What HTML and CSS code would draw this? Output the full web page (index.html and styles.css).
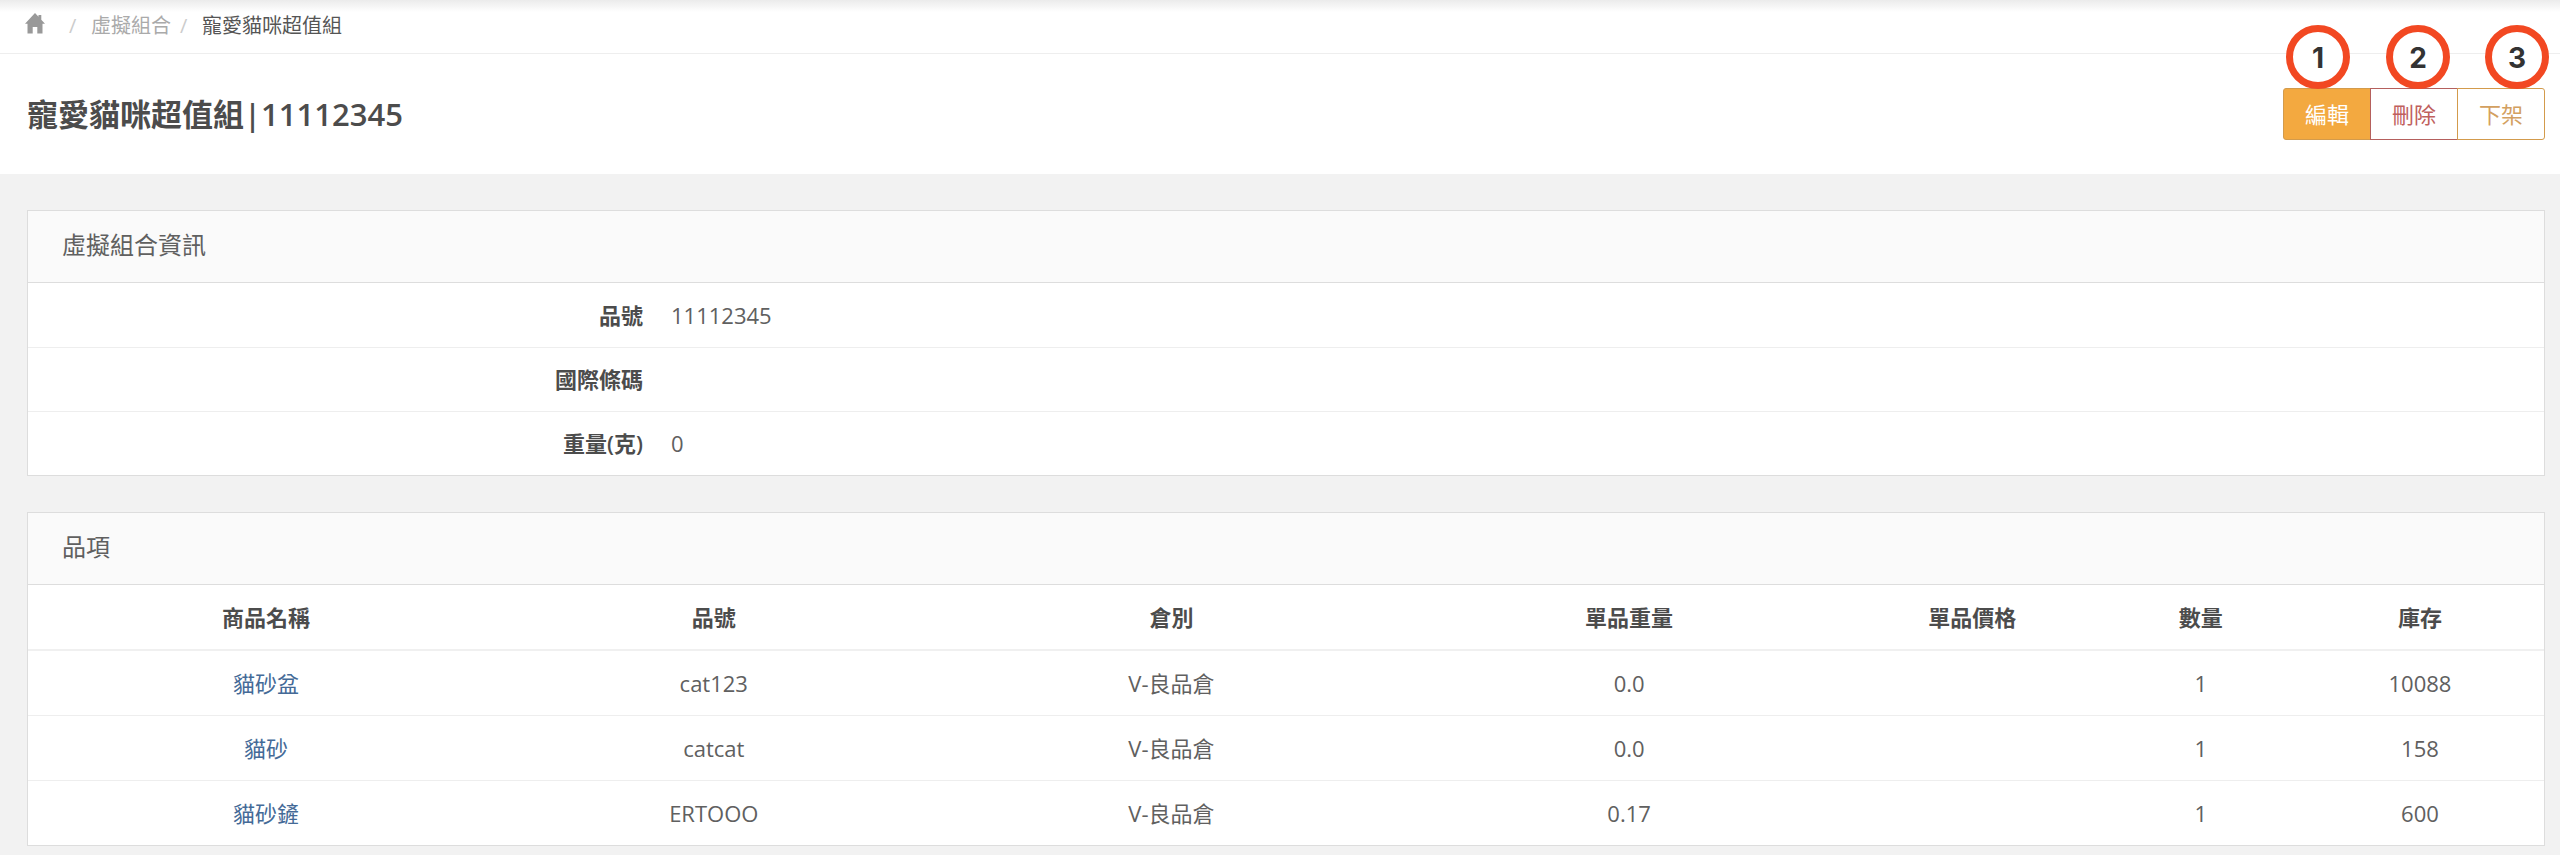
FILE: index.html
```html
<!DOCTYPE html>
<html lang="zh-Hant">
<head>
  <meta charset="UTF-8">
  <meta name="viewport" content="width=device-width, initial-scale=1.0">
  <title>寵愛貓咪超值組</title>
  <link rel="stylesheet" href="styles.css">
</head>
<body>
  <!-- Breadcrumb -->
  <nav class="breadcrumb">
    <a href="#" class="home" aria-label="首頁">
      <svg viewBox="0 0 20 21" width="20" height="21"><path d="M10 0 L13.5 3.8 V2 H16.3 V6.8 L20 10.8 H17.5 V20.5 H12.3 V14 H7.7 V20.5 H2.5 V10.8 H0 Z"/></svg>
    </a>
    <span class="sep">/</span>
    <a href="#">虛擬組合</a>
    <span class="sep">/</span>
    <span class="current">寵愛貓咪超值組</span>
  </nav>

  <!-- Page header -->
  <header class="page-header">
    <h1>寵愛貓咪超值組|11112345</h1>
    <div class="actions">
      <button type="button" class="btn btn-edit">編輯</button>
      <button type="button" class="btn btn-delete">刪除</button>
      <button type="button" class="btn btn-off">下架</button>
      <span class="mark mark-1">1</span>
      <span class="mark mark-2">2</span>
      <span class="mark mark-3">3</span>
    </div>
  </header>

  <main class="content">
    <section class="card">
      <h2>虛擬組合資訊</h2>
      <table class="info">
        <tr><th scope="row">品號</th><td>11112345</td></tr>
        <tr><th scope="row">國際條碼</th><td></td></tr>
        <tr><th scope="row">重量(克)</th><td>0</td></tr>
      </table>
    </section>

    <section class="card">
      <h2>品項</h2>
      <table class="items">
        <colgroup>
          <col class="col-name">
          <col class="col-sku">
          <col class="col-stock">
          <col class="col-weight">
          <col class="col-price">
          <col class="col-qty">
          <col class="col-left">
        </colgroup>
        <thead>
          <tr>
            <th>商品名稱</th>
            <th>品號</th>
            <th>倉別</th>
            <th>單品重量</th>
            <th>單品價格</th>
            <th>數量</th>
            <th>庫存</th>
          </tr>
        </thead>
        <tbody>
          <tr>
            <td><a href="#">貓砂盆</a></td>
            <td>cat123</td>
            <td>V-良品倉</td>
            <td>0.0</td>
            <td></td>
            <td>1</td>
            <td>10088</td>
          </tr>
          <tr>
            <td><a href="#">貓砂</a></td>
            <td>catcat</td>
            <td>V-良品倉</td>
            <td>0.0</td>
            <td></td>
            <td>1</td>
            <td>158</td>
          </tr>
          <tr>
            <td><a href="#">貓砂鏟</a></td>
            <td>ERTOOO</td>
            <td>V-良品倉</td>
            <td>0.17</td>
            <td></td>
            <td>1</td>
            <td>600</td>
          </tr>
        </tbody>
      </table>
    </section>
  </main>
</body>
</html>
```

FILE: styles.css
```css
* {
  box-sizing: border-box;
}
body {
  margin: 0;
  background-color: #f2f2f2;
  color: #606060;
  font-family: "Open Sans", "Noto Sans CJK TC", sans-serif;
  font-size: 22px;
  line-height: 32px;
}
a {
  color: #446a97;
  text-decoration: none;
}

/* Breadcrumb */
.breadcrumb {
  display: flex;
  align-items: center;
  height: 54px;
  padding: 0 25px 2px;
  border-bottom: 1px solid #eee;
  background: linear-gradient(#ebebeb, #fff 12px);
  font-size: 20px;
}
.breadcrumb a {
  color: #aaa;
}
.breadcrumb .home {
  display: flex;
  margin-right: 15px;
  padding-bottom: 4px;
}
.home svg {
  fill: #999;
}
.sep {
  width: 31px;
  padding-left: 9px;
  color: #ccc;
}
.current {
  color: #555;
}

/* Page header */
.page-header {
  display: flex;
  align-items: center;
  justify-content: space-between;
  height: 120px;
  padding: 0 15px 0 27px;
  background-color: #fff;
}
.page-header h1 {
  margin: 0;
  color: #4c4c4c;
  font-size: 31px;
  font-weight: 600;
}
.actions {
  display: flex;
  position: relative;
}
.btn {
  width: 88px;
  height: 52px;
  padding: 0;
  border: 1px solid #d39b4c;
  background-color: #fff;
  color: #d3a060;
  font: inherit;
  cursor: pointer;
}
.btn-edit {
  border-radius: 3px 0 0 3px;
  background-color: #f3a940;
  color: #fff;
}
.btn-delete {
  margin-left: -1px;
  border-color: #b5605d;
  color: #c0605d;
}
.btn-off {
  margin-left: -1px;
  border-radius: 0 3px 3px 0;
}

/* Numbered marks over the buttons */
.mark {
  position: absolute;
  top: -63px;
  width: 64px;
  height: 64px;
  border: 7px solid #f24822;
  border-radius: 50%;
  background-color: #fff;
  color: #333;
  font-family: Inter, sans-serif;
  font-size: 28px;
  font-weight: 700;
  line-height: 52px;
  text-align: center;
}
.mark-1 {
  right: 195px;
}
.mark-2 {
  right: 95px;
}
.mark-3 {
  right: -4px;
}

/* Cards */
.content {
  display: flex;
  flex-direction: column;
  gap: 36px;
  padding: 36px 15px 11px 27px;
}
.card {
  border: 1px solid #ddd;
  background-color: #fff;
}
.card h2 {
  margin: 0;
  padding: 18px 34px 21px;
  border-bottom: 1px solid #ddd;
  background-color: #fafafa;
  color: #606060;
  font-size: 24px;
  font-weight: 400;
}
table {
  width: 100%;
  border-collapse: collapse;
  table-layout: fixed;
}
th,
td {
  height: 65px;
  padding: 0 14px;
}
th {
  color: #4c4c4c;
  font-weight: 600;
}
.info th,
.info td {
  height: 64px;
}
.info tr + tr {
  border-top: 1px solid #eee;
}
.info th {
  width: 25%;
  text-align: right;
}
.items {
  text-align: center;
}
.items thead tr {
  border-bottom: 2px solid #f0f0f0;
}
.items tbody tr + tr {
  border-top: 1px solid #eee;
}
.col-name {
  width: 476px;
}
.col-sku,
.col-weight {
  width: 419px;
}
.col-stock {
  width: 496px;
}
.col-price {
  width: 267px;
}
.col-qty {
  width: 190px;
}
.col-left {
  width: 248px;
}
```
